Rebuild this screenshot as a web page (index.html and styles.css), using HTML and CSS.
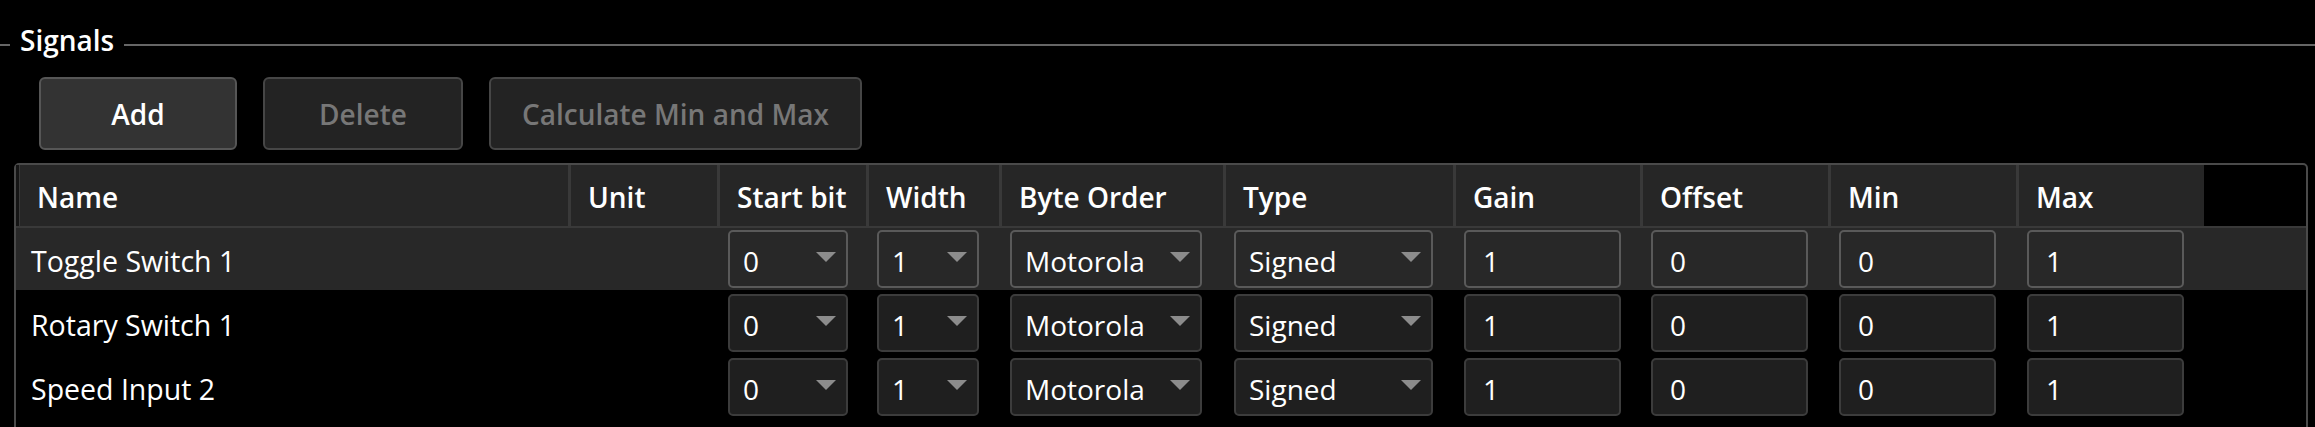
FILE: index.html
```html
<!DOCTYPE html>
<html lang="en">
<head>
    <meta charset="UTF-8">
    <meta name="viewport" content="width=device-width, initial-scale=1.0">
    <title>Signals</title>
    <link rel="stylesheet" href="styles.css">
</head>
<body>
    <div class="group-title">
        <span class="rule rule-short"></span>
        <span class="title">Signals</span>
        <span class="rule rule-long"></span>
    </div>

    <div class="toolbar">
        <button class="btn btn-add">Add</button>
        <button class="btn btn-off btn-delete">Delete</button>
        <button class="btn btn-off btn-calc">Calculate Min and Max</button>
    </div>

    <div class="grid">
        <div class="grid-head">
            <div class="row-head"></div>
            <div class="col-head">Name</div>
            <div class="col-head">Unit</div>
            <div class="col-head">Start bit</div>
            <div class="col-head">Width</div>
            <div class="col-head">Byte Order</div>
            <div class="col-head">Type</div>
            <div class="col-head">Gain</div>
            <div class="col-head">Offset</div>
            <div class="col-head">Min</div>
            <div class="col-head last">Max</div>
        </div>

        <div class="grid-row selected">
            <div class="row-head"></div>
            <div class="cell name">Toggle Switch 1</div>
            <div class="cell"></div>
            <div class="cell"><div class="combo w-start"><span>0</span><span class="arrow"></span></div></div>
            <div class="cell"><div class="combo w-width"><span>1</span><span class="arrow"></span></div></div>
            <div class="cell"><div class="combo w-order"><span>Motorola</span><span class="arrow"></span></div></div>
            <div class="cell"><div class="combo w-type"><span>Signed</span><span class="arrow"></span></div></div>
            <div class="cell"><div class="textbox">1</div></div>
            <div class="cell"><div class="textbox">0</div></div>
            <div class="cell"><div class="textbox">0</div></div>
            <div class="cell"><div class="textbox">1</div></div>
        </div>

        <div class="grid-row">
            <div class="row-head"></div>
            <div class="cell name">Rotary Switch 1</div>
            <div class="cell"></div>
            <div class="cell"><div class="combo w-start"><span>0</span><span class="arrow"></span></div></div>
            <div class="cell"><div class="combo w-width"><span>1</span><span class="arrow"></span></div></div>
            <div class="cell"><div class="combo w-order"><span>Motorola</span><span class="arrow"></span></div></div>
            <div class="cell"><div class="combo w-type"><span>Signed</span><span class="arrow"></span></div></div>
            <div class="cell"><div class="textbox">1</div></div>
            <div class="cell"><div class="textbox">0</div></div>
            <div class="cell"><div class="textbox">0</div></div>
            <div class="cell"><div class="textbox">1</div></div>
        </div>

        <div class="grid-row">
            <div class="row-head"></div>
            <div class="cell name">Speed Input 2</div>
            <div class="cell"></div>
            <div class="cell"><div class="combo w-start"><span>0</span><span class="arrow"></span></div></div>
            <div class="cell"><div class="combo w-width"><span>1</span><span class="arrow"></span></div></div>
            <div class="cell"><div class="combo w-order"><span>Motorola</span><span class="arrow"></span></div></div>
            <div class="cell"><div class="combo w-type"><span>Signed</span><span class="arrow"></span></div></div>
            <div class="cell"><div class="textbox">1</div></div>
            <div class="cell"><div class="textbox">0</div></div>
            <div class="cell"><div class="textbox">0</div></div>
            <div class="cell"><div class="textbox">1</div></div>
        </div>
    </div>
</body>
</html>
```

FILE: styles.css
```css
html, body {
    margin: 0;
    height: 100%;
    overflow: hidden;
}

body {
    background-color: #000;
    color: #fff;
    font-family: 'Open Sans', 'Noto Sans', sans-serif;
    font-size: 28px;
}

/* group box header */
.group-title {
    display: flex;
    align-items: flex-start;
    margin-top: 21px;
    height: 38px;
}

.rule {
    height: 2px;
    margin-top: 23px;
    background-color: #666;
}

.rule-short {
    width: 10px;
}

.rule-long {
    flex-grow: 1;
}

.title {
    padding: 0 10px;
    line-height: 38px;
    font-weight: 600;
}

/* buttons */
.toolbar {
    display: flex;
    gap: 26px;
    margin-top: 18px;
    padding-left: 39px;
}

.btn {
    height: 73px;
    box-sizing: border-box;
    border-radius: 6px;
    font-family: inherit;
    font-size: 28px;
    font-weight: 600;
    padding: 0 31px;
}

.btn-add {
    width: 198px;
    background-color: #333;
    border: 2px solid #565656;
    color: #fff;
}

.btn-off {
    background-color: #232323;
    border: 2px solid #464646;
    color: #777;
}

.btn-delete {
    width: 200px;
}

/* data grid */
.grid {
    margin: 13px 7px 0 14px;
    height: 320px;
    border: 2px solid #4a4a4a;
    border-radius: 5px;
}

.grid-head,
.grid-row {
    display: grid;
    grid-template-columns: 4px 551px 149px 149px 133px 224px 230px 187px 188px 188px 185px;
}

.grid-head {
    height: 61px;
    border-bottom: 2px solid #393939;
}

.grid-head .row-head {
    background-color: #151515;
    border-right: 1px solid #3a3a3a;
    box-sizing: border-box;
}

.col-head {
    display: flex;
    align-items: center;
    padding: 3px 0 0 17px;
    background-color: #262626;
    border-right: 3px solid #393939;
    font-weight: 600;
}

.col-head.last {
    border-right: none;
}

.grid-row {
    height: 62px;
    margin-bottom: 2px;
}

.grid-row.selected {
    background-color: #282828;
}

.cell {
    display: flex;
    align-items: center;
    padding-left: 8px;
}

.cell.name {
    padding: 3px 0 0 11px;
    font-size: 28.5px;
}

.combo,
.textbox {
    display: flex;
    align-items: center;
    height: 58px;
    box-sizing: border-box;
    border: 2px solid #3c3c3c;
    border-radius: 5px;
    background-color: #1f1f1f;
}

.selected .combo,
.selected .textbox {
    border-color: #5a5a5a;
    background-color: #282828;
}

.combo {
    justify-content: space-between;
    padding: 3px 10px 0 13px;
}

.textbox {
    width: 157px;
    padding: 3px 0 0 17px;
}

.w-start { width: 120px; }
.w-width { width: 102px; }
.w-order { width: 192px; }
.w-type { width: 199px; }

.arrow {
    width: 0;
    height: 0;
    margin-top: -7px;
    border-left: 10px solid transparent;
    border-right: 10px solid transparent;
    border-top: 10px solid #8c8c8c;
}
```
